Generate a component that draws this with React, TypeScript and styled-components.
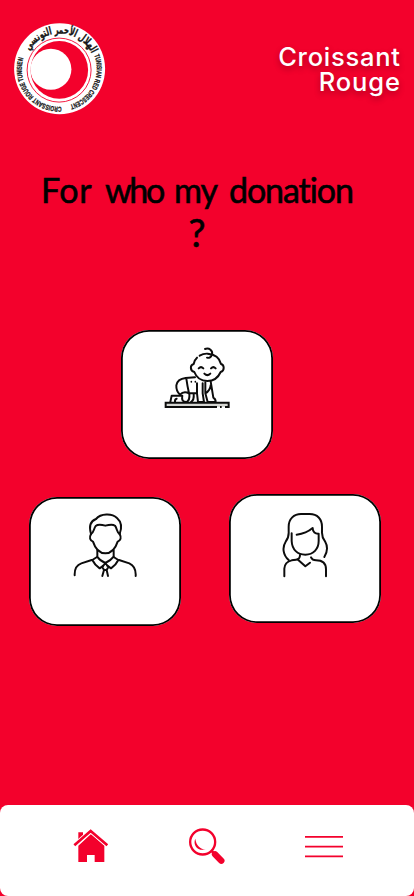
import React from "react";
import styled, { createGlobalStyle } from "styled-components";

const RED = "#f3012c";

const GlobalStyle = createGlobalStyle`
  * { box-sizing: border-box; }
  body { margin: 0; background: ${RED}; }
`;

const Screen = styled.div`
  width: 414px;
  height: 896px;
  display: flex;
  flex-direction: column;
  background: ${RED};
  overflow: hidden;
`;

const Header = styled.header`
  height: 162px;
  padding: 22px 14px 0 13px;
  display: flex;
  justify-content: space-between;
  align-items: flex-start;
`;

const LogoArt = styled.svg`
  display: block;
  overflow: visible;
`;

const Brand = styled.div`
  margin-top: 22px;
  display: flex;
  flex-direction: column;
  align-items: flex-end;
  color: #fff;
  font: 500 25.5px/25px Inter, sans-serif;
  text-shadow: 0 3px 6px rgba(0, 0, 0, 0.3);
`;

const BrandLine = styled.span<{ $spacing: number }>`
  letter-spacing: ${(p) => p.$spacing}px;
  margin-right: ${(p) => -p.$spacing}px;
`;

const Title = styled.h1`
  margin: 0;
  height: 168px;
  padding: 6px 20px 0 0;
  display: flex;
  flex-direction: column;
  align-items: center;
  color: #000;
  font: 400 34px/43px Lato, sans-serif;
  font-variant-ligatures: none;
  -webkit-text-stroke: 0.6px #000;
`;

const TitleLine = styled.span<{ $size?: number }>`
  display: flex;
  gap: 12px;
  font-size: ${(p) => p.$size ?? 34}px;
`;

const Word = styled.span<{ $width: number; $spacing: number }>`
  width: ${(p) => p.$width}px;
  letter-spacing: ${(p) => p.$spacing}px;
  white-space: nowrap;
`;

const Choices = styled.main`
  flex: 1;
  display: flex;
  flex-direction: column;
`;

const ChoiceRow = styled.div<{ $left: number }>`
  display: flex;
  gap: 48px;
  padding-left: ${(p) => p.$left}px;
  margin-bottom: 35px;
`;

const Card = styled.button<{ $iconTop: number; $drop?: number }>`
  width: 152px;
  height: 129px;
  margin: ${(p) => p.$drop ?? 0}px 0 0;
  padding: ${(p) => p.$iconTop}px 0 0;
  display: flex;
  justify-content: center;
  align-items: flex-start;
  border: 0;
  border-radius: 28px;
  background: #fff;
  box-shadow: inset 0 0 0 1.8px #000;
`;

const Drawing = styled.svg`
  display: block;
  flex: none;
  fill: none;
  stroke: #0c0c0c;
  stroke-width: 5.9;
  stroke-linecap: round;
  stroke-linejoin: round;
`;

const NavBar = styled.nav`
  height: 91px;
  padding: 0 0 9px 73px;
  display: flex;
  align-items: center;
  gap: 78.5px;
  background: #fff;
  border-radius: 8px;
`;

const NavIcon = styled.svg`
  display: block;
  flex: none;
  color: ${RED};
`;

const Logo = () => (
  <LogoArt width="93" height="94" viewBox="13 22 93 94">
    <defs>
      <path id="arc-ar" d="M27.4 54.4 A35.4 35.4 0 0 1 91.6 53.6" />
      <path id="arc-en" d="M94.2 55.2 A37.6 37.6 0 0 1 68.2 105.4" />
      <path id="arc-fr" d="M61.5 106.6 A37.6 37.6 0 0 1 24.3 55.4" />
    </defs>
    <circle cx="59.6" cy="68.8" r="45.5" fill="#fff" />
    <circle cx="59.1" cy="70.1" r="32" fill="none" stroke={RED} strokeWidth="0.9" />
    <circle cx="59.3" cy="69.9" r="28.8" fill={RED} />
    <circle cx="50.9" cy="69.3" r="20.5" fill="#fff" />
    <g fill="#161616" stroke="#161616" fontWeight="700">
      <text fontFamily="'DejaVu Sans', sans-serif" fontSize="11" direction="rtl" strokeWidth="0.35">
        <textPath href="#arc-ar" textLength="76" lengthAdjust="spacingAndGlyphs" startOffset="100%">
          الهلال الأحمر التونسي
        </textPath>
      </text>
      <text fontFamily="'Liberation Sans', sans-serif" fontSize="7.2" strokeWidth="0.3">
        <textPath href="#arc-en" textLength="62" lengthAdjust="spacingAndGlyphs">
          TUNISIAN RED CRESCENT
        </textPath>
      </text>
      <text fontFamily="'Liberation Sans', sans-serif" fontSize="7.2" strokeWidth="0.3">
        <textPath href="#arc-fr" textLength="72" lengthAdjust="spacingAndGlyphs">
          CROISSANT ROUGE TUNISIEN
        </textPath>
      </text>
    </g>
  </LogoArt>
);

const Baby = () => (
  <Drawing width="68" height="65" viewBox="144 69 204 195">
    <path d="M270 81 C283 76 294 87 291 97 C289 106 282 109 276 107" />
    <path d="M254 101 Q266 94 278 95 Q312 98 318 126 C328 128 330 146 317 150 C309 168 295 177 277 177 C258 177 244 166 238 150 C224 146 225 129 236 126 Q238 114 246 107" />
    <path d="M251 139 Q258 132 265 139 M288 139 Q295 132 302 139 M268 155 Q277 164 286 155" />
    <path d="M240 166 L212 168 Q187 171 184 190 Q183 207 195 218 M214 170 Q217 192 222 214 M195 218 Q206 206 222 214 H243 M246 184 V214 L249 240 M263 184 V214 L267 240 M249 240 H267 M271 181 V214 L278 240 H302 Q302 231 295 227 L287 178 M271 214 Q286 205 287 190" />
    <path d="M166 240 L170 221 H202 M180 240 Q179 231 185 230 M202 221 Q198 240 214 240 M223 216 Q225 234 215 240 M236 216 Q238 234 228 240" />
    <path d="M229 179 V180 M241 179 V180" strokeWidth="5" />
    <path d="M152 242 H341 V255 H152 Z" fill="#d5d6d2" stroke="none" />
    <path d="M306 255 H152 V242 H341 V255 H330 M315 255 H320" strokeLinecap="butt" strokeLinejoin="miter" />
  </Drawing>
);

const Man = () => (
  <Drawing width="64" height="66" viewBox="159 66 192 198">
    <path d="M213 132 C206 108 212 93 228 87 C242 70 276 69 291 84 C307 98 305 116 299 132" />
    <path d="M213 132 C222 128 221 116 227 108 Q235 101 256 107 Q277 101 285 107 C292 116 289 127 299 132" />
    <path d="M213 132 C207 143 210 152 219 155 C226 177 240 190 256 190 C272 190 286 177 293 155 C302 152 305 143 299 132" />
    <path d="M232 181 V200 Q239 211 256 219 Q273 211 281 200 V181" />
    <path d="M231 201 L217 210 Q224 225 239 235 L250 227 M281 201 L295 210 Q288 225 273 235 L262 227" />
    <path d="M256 219 L247 231 L252 240 H260 L265 231 Z M252 240 L247 258 M260 240 L264 258" />
    <path d="M215 210 L184 220 Q163 227 164 256 M297 210 L328 220 Q349 230 347 258" />
  </Drawing>
);

const Woman = () => (
  <Drawing width="48" height="67" viewBox="183 75 144 201">
    <path d="M206 222 C189 207 186 184 197 167 Q207 154 206 137 V122 C206 98 222 84 243 84 H269 C292 84 306 99 306 122 V137 Q305 153 315 166 Q328 189 313 213" />
    <path d="M215 142 V165 C216 191 233 206 256 206 C280 206 296 189 296 165 V143 C286 144 278 138 278 126 Q259 142 230 146" />
    <path d="M240 207 Q240 220 228 221 L215 223 Q194 228 193 248 V271" />
    <path d="M234 221 L256 241 L270 230 M273 214 Q277 223 288 223 Q318 223 318 250 V271" />
  </Drawing>
);

const App = () => (
  <>
    <GlobalStyle />
    <Screen>
      <Header>
        <Logo />
        <Brand>
          <BrandLine $spacing={0.75}>Croissant</BrandLine>
          <BrandLine $spacing={0.9}>Rouge</BrandLine>
        </Brand>
      </Header>
      <Title>
        <TitleLine>
          <Word $width={52} $spacing={0.6}>For</Word>
          <Word $width={57} $spacing={-2.4}>who</Word>
          <Word $width={43} $spacing={-1}>my</Word>
          <Word $width={124} $spacing={-1.1}>donation</Word>
        </TitleLine>
        <TitleLine $size={38}>?</TitleLine>
      </Title>
      <Choices>
        <ChoiceRow $left={121}>
          <Card aria-label="Child" $iconTop={15}><Baby /></Card>
        </ChoiceRow>
        <ChoiceRow $left={29}>
          <Card aria-label="Man" $iconTop={15} $drop={3}><Man /></Card>
          <Card aria-label="Woman" $iconTop={17}><Woman /></Card>
        </ChoiceRow>
      </Choices>
      <NavBar>
        <NavIcon width="36" height="34" viewBox="39 39 108 102">
          <path d="M55 49 H69 V61 L55 74 Z" fill="currentColor" />
          <path d="M55 89 L93 54 L133 89 V138 H104 V117 H81 V138 H55 Z" fill="currentColor" />
          <path d="M43 88 L92 45 L143 88" fill="none" stroke="#fff" strokeWidth="13" />
          <path d="M43 88 L92 45 L142 88" fill="none" stroke="currentColor" strokeWidth="8" />
        </NavIcon>
        <NavIcon width="38" height="38" viewBox="24 36 114 114">
          <circle cx="68" cy="81" r="37.5" fill="none" stroke="currentColor" strokeWidth="7" />
          <path d="M46 71 C37 91 55 110 77 103 C61 103 48 91 46 71 Z" fill="currentColor" />
          <path d="M94 107 L101 114" stroke="currentColor" strokeWidth="8" />
          <path d="M105 118 L124 137" stroke="currentColor" strokeWidth="19" strokeLinecap="round" />
        </NavIcon>
        <NavIcon width="40" height="24" viewBox="372 57 120 72">
          <path d="M375 65.5 H489 M375 95 H489 M375 124 H489" stroke="currentColor" strokeWidth="5" />
        </NavIcon>
      </NavBar>
    </Screen>
  </>
);

export default App;
